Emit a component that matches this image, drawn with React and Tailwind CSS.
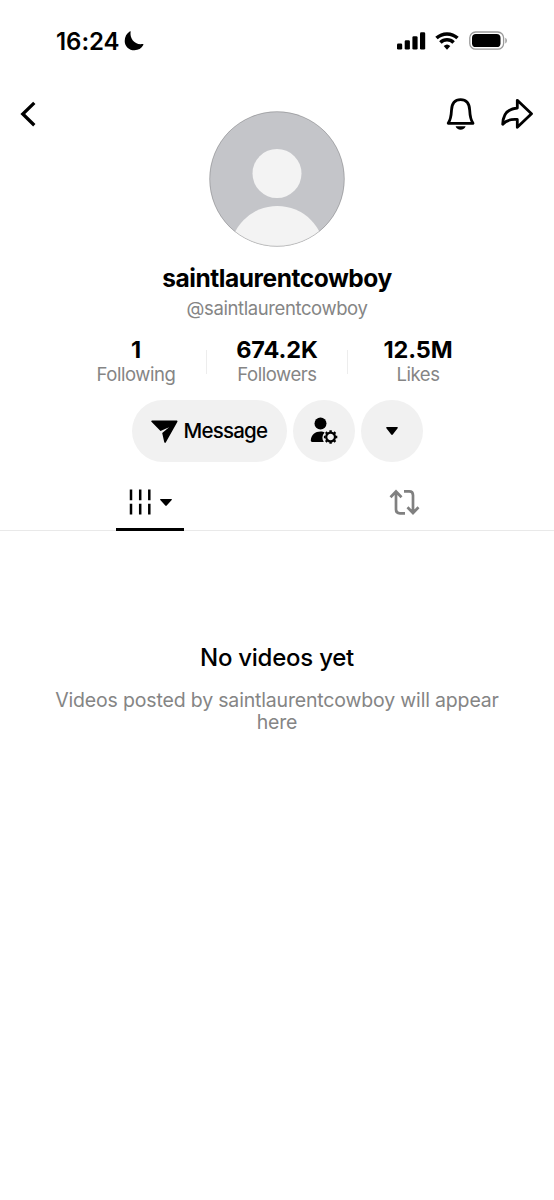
function StatusBar() {
  return (
    <div className="flex h-[82px] items-center justify-between pl-[56px] pr-[46px]">
      <div className="flex items-center gap-[5px]">
        <span className="w-[63px] whitespace-nowrap pt-px text-[24px] font-semibold leading-7 tracking-[-0.05px]">16:24</span>
        <svg width="20" height="20" viewBox="0 0 20 20" fill="#000">
          <path d="M6.600.700C5.600 6.900 10.300 14.200 18.400 13.100c.8-.1 1.300.3.900 1C17.500 17.500 14.300 19.300 10.500 19.300 5 19.300.700 15.200.700 9.900.700 5.800 2.700 2.300 5.700.500c.6-.3 1-.3.900.200Z" />
        </svg>
      </div>
      <div className="flex items-center">
        <svg width="29" height="18" viewBox="0 0 29 18" fill="#000">
          <rect x="0" y="11.500" width="5.200" height="6" rx="1.300" />
          <rect x="7.700" y="8.300" width="5.200" height="9.200" rx="1.300" />
          <rect x="15.400" y="4.300" width="5.200" height="13.200" rx="1.300" />
          <rect x="23" y="0.300" width="5.200" height="17.200" rx="1.300" />
        </svg>
        <svg className="ml-[9px]" width="24" height="18" viewBox="0 0 24 18" fill="none" stroke="#000" strokeWidth="3.500">
          <path d="M1.500 6.100a15.200 15.200 0 0 1 21 0" />
          <path d="M5.400 10.600a9.300 9.300 0 0 1 13.200 0" />
          <path d="M8.700 14.100a4.900 4.900 0 0 1 6.600 0L12 17.700Z" fill="#000" stroke="none" />
        </svg>
        <svg className="ml-[10px]" width="39" height="20" viewBox="0 0 39 20">
          <rect x="0.800" y="1" width="33.800" height="17.200" rx="5.800" fill="none" stroke="#9a9a9a" strokeWidth="1.300" />
          <rect x="3" y="3.100" width="28.500" height="13" rx="3.900" fill="#000" />
          <path d="M36.300 6.700c2.100 1.300 2.100 4.400 0 5.800Z" fill="#9a9a9a" />
        </svg>
      </div>
    </div>
  );
}

function Avatar() {
  return (
    <svg className="mt-[29px]" width="136" height="136" viewBox="0 0 136 136">
      <defs>
        <clipPath id="avatar">
          <circle cx="68" cy="68" r="67.500" />
        </clipPath>
      </defs>
      <g clipPath="url(#avatar)">
        <rect width="136" height="136" fill="#c4c5c9" />
        <circle cx="68" cy="62.500" r="24.500" fill="#f3f3f3" />
        <circle cx="68.300" cy="142.500" r="47.500" fill="#f3f3f3" />
      </g>
      <circle cx="68" cy="68" r="67.300" fill="none" stroke="#000" strokeOpacity=".2" />
    </svg>
  );
}

function Header() {
  return (
    <header className="grid grid-cols-[1fr_136px_1fr] items-start pl-[20px] pr-[20px]">
      <button aria-label="Back" className="mt-[18px] w-4">
        <svg width="16" height="27" viewBox="0 0 16 27" fill="none" stroke="#000" strokeWidth="3.300">
          <path d="M14.300 2.900 2.800 14 14.300 25.300" />
        </svg>
      </button>
      <Avatar />
      <div className="mt-[15px] flex items-start justify-end gap-[25px]">
        <button aria-label="Notifications">
          <svg width="29" height="34" viewBox="0 0 29 34" fill="none" stroke="#000" strokeWidth="2.800" strokeLinejoin="round">
            <path d="M2.200 26.300c2.500-3.800 3-6.700 3.300-13.100C5.800 6.200 9.400 2.600 14.600 2.600s8.800 3.600 9.100 10.600c.3 6.400.8 9.300 3.300 13.100Z" />
            <path d="M9.600 29.200h10c-1.100 4.600-8.900 4.600-10 0Z" fill="#000" stroke="none" />
          </svg>
        </button>
        <button aria-label="Share">
          <svg width="34" height="34" viewBox="0 0 34 34" fill="none" stroke="#000" strokeWidth="2.800" strokeLinejoin="round">
            <path d="M17.300 3.300 31.500 16.700 17.300 30.200v-7.700C9.600 21.900 5.900 23.500 2.700 27.300 3 17.400 7.800 11.700 17.300 11Z" />
          </svg>
        </button>
      </div>
    </header>
  );
}

function Stat({ value, label }) {
  return (
    <div className="flex w-[140px] flex-col items-center">
      <span className="text-[23.500px] font-bold leading-6 tracking-[-0.1px]">{value}</span>
      <span className="text-[18.500px] leading-6 tracking-[-0.450px] text-[#858585]">{label}</span>
    </div>
  );
}

function Actions() {
  return (
    <div className="mt-[14px] flex justify-center gap-[6px]">
      <button className="flex h-[62px] w-[155px] items-center rounded-full bg-[#f1f1f1] pl-[19px]">
        <svg className="mt-px" width="27" height="25" viewBox="0 0 27 25" fill="#000">
          <path d="M1.200 1.400h24.200c1 0 1.400.7.900 1.500L14.900 23.300c-.5.900-1.500.8-1.700-.2l-2-9.100 6.900-5.700-8.600 3.600L.7 3C-.1 2.300.2 1.400 1.200 1.400Z" />
        </svg>
        <span className="ml-[6px] text-[20.500px] font-medium tracking-[-0.800px]">Message</span>
      </button>
      <button aria-label="Manage follow" className="flex size-[62px] items-center justify-center rounded-full bg-[#f1f1f1]">
        <svg width="28" height="28" viewBox="0 0 28 28" fill="#000">
          <circle cx="10.500" cy="6.500" r="6" />
          <path d="M10.700 14.600c1.600 0 2.700.2 3.900.8-2.700 3-2.900 6.300-.8 9.500H2.300c-1 0-1.600-.6-1.500-1.600.5-5.500 4.400-8.700 9.900-8.700Z" />
          <g transform="translate(20.600 20)">
            <circle r="4.400" fill="none" stroke="#000" strokeWidth="2.200" />
            <path d="M0-5V-6.700M0 5V6.700M-5 0H-6.700M5 0H6.700M3.500-3.500 4.800-4.800M-3.500-3.500-4.800-4.800M3.500 3.500 4.800 4.800M-3.500 3.500-4.800 4.800" stroke="#000" strokeWidth="2.400" />
          </g>
        </svg>
      </button>
      <button aria-label="More" className="flex size-[62px] items-center justify-center rounded-full bg-[#f1f1f1]">
        <svg width="12" height="9" viewBox="0 0 12 9" fill="#000">
          <path d="M1 0h10c.9 0 1.100.700.600 1.300L6.800 7.500c-.5.600-1.100.600-1.600 0L.400 1.300C-.100.700.100 0 1 0Z" />
        </svg>
      </button>
    </div>
  );
}

function Tabs() {
  return (
    <nav className="mt-[17px] flex h-[52px] border-b border-[#e9e9e9] px-[23px]">
      <div className="flex flex-1 flex-col items-center justify-between">
        <div className="mt-[10px] flex items-center gap-[8px]">
          <svg width="23" height="26" viewBox="0 0 23 26" stroke="#000" strokeWidth="2.500">
            <path d="M2 .500V11.200M11.200.500V11.200M20.300.500V11.200M2 14.800V25.500M11.200 14.800V25.500M20.300 14.800V25.500" />
          </svg>
          <svg className="mt-px" width="12" height="8" viewBox="0 0 12 8" fill="#000">
            <path d="M.800 0h10.400c.8 0 1 .6.500 1.100L6.700 6.600c-.4.500-1 .5-1.400 0L.300 1.100C-.200.600 0 0 .800 0Z" />
          </svg>
        </div>
        <div className="-mb-px h-[3px] w-[68px] bg-black" />
      </div>
      <div className="flex flex-1 justify-center">
        <svg className="mt-[10px]" width="31" height="27" viewBox="0 0 31 27" fill="none" stroke="#808080" strokeWidth="2.700">
          <path d="M1.500 8.300 7 2.500l5.500 5.800M7 3v17.500Q7 24.300 10.800 24.300H16M15 2.400h5.200Q24 2.400 24 6.200V23.500M18.500 18.200 24 24l5.500-5.800" />
        </svg>
      </div>
    </nav>
  );
}

export default function App() {
  return (
    <main className="min-h-[1200px] w-[554px] overflow-hidden bg-white font-[Inter,sans-serif] text-black">
      <StatusBar />
      <Header />
      <section className="flex flex-col items-center">
        <h1 className="mt-[15px] text-[24.500px] font-bold leading-8 tracking-[-0.450px]">saintlaurentcowboy</h1>
        <p className="mt-[2px] text-[18.500px] leading-6 tracking-[-0.400px] text-[#858585]">@saintlaurentcowboy</p>
      </section>
      <section className="mt-[18px] flex items-center justify-center">
        <Stat value="1" label="Following" />
        <div className="h-6 w-px bg-[#ededed]" />
        <Stat value="674.2K" label="Followers" />
        <div className="h-6 w-px bg-[#ededed]" />
        <Stat value="12.5M" label="Likes" />
      </section>
      <Actions />
      <Tabs />
      <section className="mt-[111px] px-[40px] text-center">
        <h2 className="text-[24px] font-medium leading-8 tracking-[-0.250px]">No videos yet</h2>
        <p className="mt-[15px] text-[19.500px] leading-[22px] tracking-[-0.170px] text-[#858585]">
          Videos posted by saintlaurentcowboy will appear
          <br />
          here
        </p>
      </section>
    </main>
  );
}
